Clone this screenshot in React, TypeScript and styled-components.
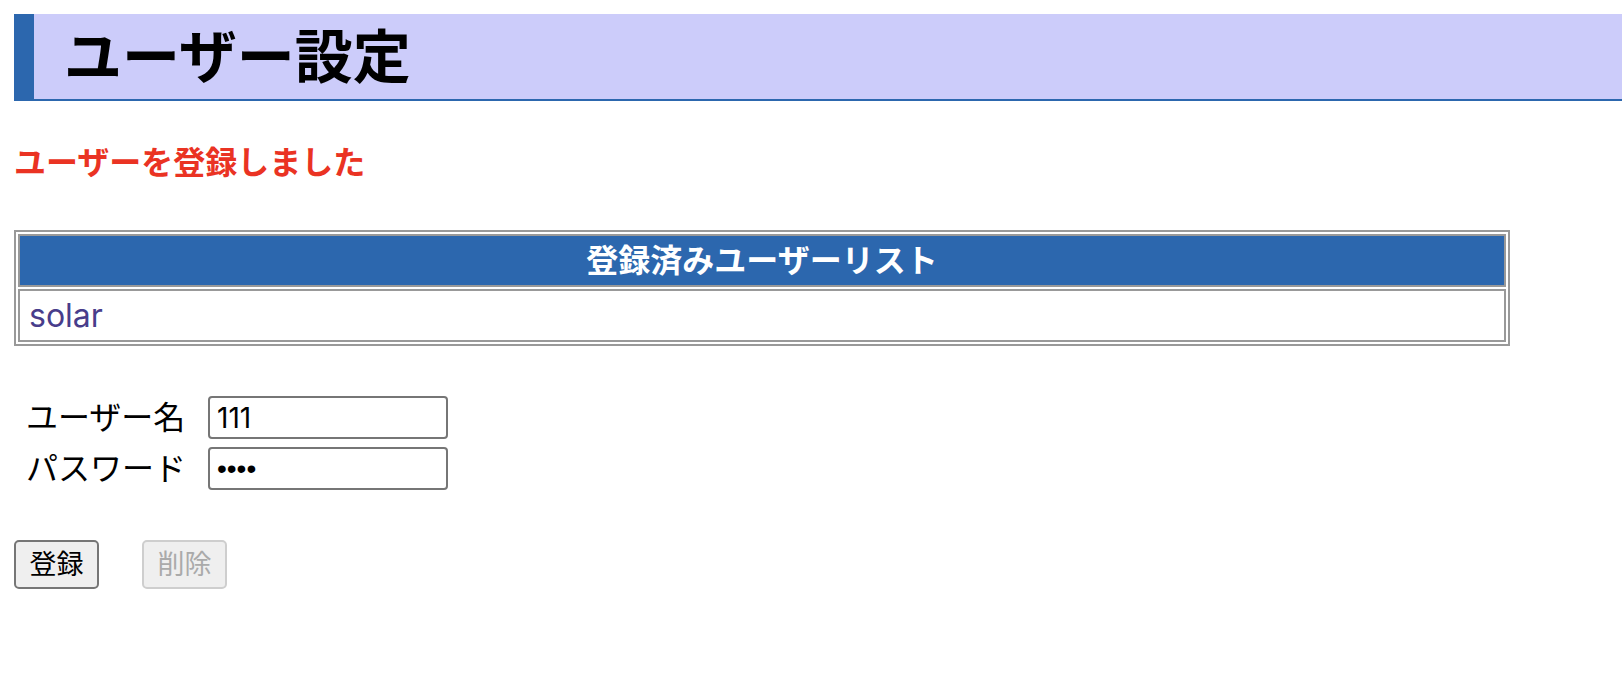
import { useState } from "react";
import styled, { createGlobalStyle } from "styled-components";

const GlobalStyle = createGlobalStyle`
  * { box-sizing: border-box; }
  body {
    margin: 0;
    background: #fff;
    color: #000;
    font-family: Inter, "Noto Sans CJK JP", sans-serif;
    font-size: 32px;
    line-height: 48px;
  }
`;

const Page = styled.main`
  display: flex;
  flex-direction: column;
  align-items: flex-start;
  padding: 14px 0 14px 14px;
`;

const Title = styled.h1`
  align-self: stretch;
  margin: 0;
  padding: 1px 30px 0;
  border-left: 20px solid #2c67ae;
  border-bottom: 2px solid #2c67ae;
  background: #ccccfa;
  font-size: 58px;
  line-height: 84px;
`;

const Message = styled.p`
  margin: 38px 0 43px;
  color: #ea3323;
  font-weight: 700;
`;

const UserTable = styled.table`
  width: calc(100% - 112px);
  border: 2px solid #999;
  border-collapse: separate;
  border-spacing: 2px;
`;

const HeadCell = styled.th`
  height: 53px;
  padding: 0 9px;
  border: 2px solid #999;
  background: #2c67ae;
  color: #fff;
`;

const Cell = styled.td`
  height: 53px;
  padding: 0 9px;
  border: 2px solid #999;
`;

const UserLink = styled.a`
  color: #483d8b;
  text-decoration: none;
`;

const Form = styled.form`
  display: flex;
  flex-direction: column;
  gap: 50px;
  margin-top: 50px;
`;

const Fields = styled.div`
  display: grid;
  grid-template-columns: max-content 240px;
  column-gap: 22px;
  row-gap: 8px;
  padding-left: 12px;
`;

const Label = styled.label`
  line-height: 43px;
`;

const TextInput = styled.input`
  height: 43px;
  padding: 0 7px;
  border: 2px solid #767676;
  border-radius: 4px;
  background: #fff;
  color: #000;
  font-family: inherit;
  font-size: 28px;

  &[type="password"] {
    font-family: "Liberation Sans", sans-serif;
  }
`;

const Actions = styled.div`
  display: flex;
  gap: 43px;
`;

const Button = styled.button`
  min-width: 85px;
  height: 49px;
  padding: 0 13px;
  border: 2px solid #767676;
  border-radius: 5px;
  background: #efefef;
  color: #000;
  font-family: inherit;
  font-size: 27px;
  line-height: 40px;

  &:disabled {
    border-color: #cecece;
    color: #aaa;
  }
`;

const users = ["solar"];

export default function App() {
  const [name, setName] = useState("111");
  const [password, setPassword] = useState("1111");

  return (
    <>
      <GlobalStyle />
      <Page>
        <Title>ユーザー設定</Title>
        <Message role="status">ユーザーを登録しました</Message>
        <UserTable>
          <thead>
            <tr>
              <HeadCell scope="col">登録済みユーザーリスト</HeadCell>
            </tr>
          </thead>
          <tbody>
            {users.map((user) => (
              <tr key={user}>
                <Cell>
                  <UserLink href={`#${user}`}>{user}</UserLink>
                </Cell>
              </tr>
            ))}
          </tbody>
        </UserTable>
        <Form onSubmit={(event) => event.preventDefault()}>
          <Fields>
            <Label htmlFor="name">ユーザー名</Label>
            <TextInput id="name" type="text" value={name} onChange={(e) => setName(e.target.value)} />
            <Label htmlFor="password">パスワード</Label>
            <TextInput id="password" type="password" value={password} onChange={(e) => setPassword(e.target.value)} />
          </Fields>
          <Actions>
            <Button type="submit">登録</Button>
            <Button type="button" disabled>削除</Button>
          </Actions>
        </Form>
      </Page>
    </>
  );
}
